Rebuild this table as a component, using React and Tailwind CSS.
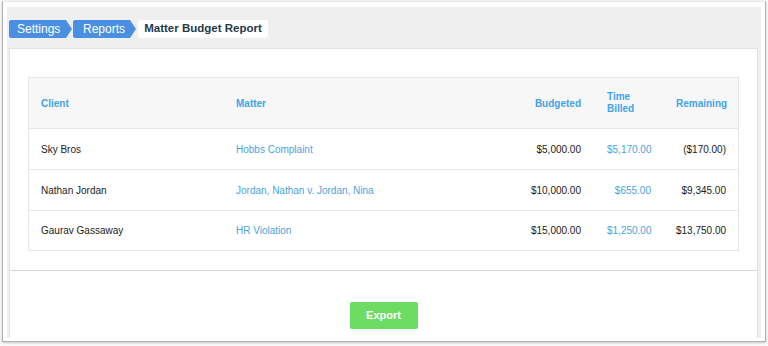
const rows = [
  { client: "Sky Bros", matter: "Hobbs Complaint", budgeted: "$5,000.00", billed: "$5,170.00", remaining: "($170.00)" },
  { client: "Nathan Jordan", matter: "Jordan, Nathan v. Jordan, Nina", budgeted: "$10,000.00", billed: "$655.00", remaining: "$9,345.00" },
  { client: "Gaurav Gassaway", matter: "HR Violation", budgeted: "$15,000.00", billed: "$1,250.00", remaining: "$13,750.00" },
];

const cols = "grid grid-cols-[194px_251px_120px_70px_74px]";

function Crumb({ children, pad }) {
  return (
    <div
      className={`h-[18px] w-[63px] flex items-center bg-[#4a90e2] text-white text-[12px] rounded-l-[2px] [clip-path:polygon(0_0,57px_0,63px_50%,57px_100%,0_100%)] ${pad}`}
    >
      {children}
    </div>
  );
}

export default function App() {
  return (
    <div className="w-[768px] h-[346px] bg-white pt-[1px] pl-[2px] font-['Liberation_Sans',Arial,sans-serif]">
      <div className="w-[764px] h-[341px] bg-white border border-[#b3b3b3] border-t-[#e6e6e6] pt-[5px] pl-[4px] shadow-[0_1px_3px_rgba(0,0,0,0.25)]">
        <div className="w-[754px] h-[331px] bg-[#efefef] flex flex-col">
          <div className="h-[41px] shrink-0 pt-[13px] pl-[2px] flex items-start">
            <Crumb pad="pl-[8px]">Settings</Crumb>
            <div className="ml-[1px]">
              <Crumb pad="pl-[10px]">Reports</Crumb>
            </div>
            <div className="ml-[2px] h-[18px] w-[130px] bg-white rounded-[2px] flex items-center justify-center text-[11.5px] font-bold text-[#233a4b]">
              Matter Budget Report
            </div>
          </div>

          <div className="flex-1 ml-[2px] mr-[3px] bg-white border border-[#e2e2e2] border-b-0 flex flex-col">
            <div className="mt-[28px] mx-[18px] border border-[#e6e6e6] text-[10px]">
              <div className={`${cols} h-[51px] bg-[#f7f7f7] border-b border-[#e6e6e6] font-bold text-[#42a4e8] items-center`}>
                <div className="pl-[12px]">Client</div>
                <div className="pl-[13px]">Matter</div>
                <div className="pr-[13px] text-right">Budgeted</div>
                <div className="pl-[13px] pr-[13px] leading-[12px]">
                  Time
                  <br />
                  Billed
                </div>
                <div className="pl-[12px] pr-[12px] text-right">Remaining</div>
              </div>
              {rows.map((r, i) => (
                <div
                  key={r.client}
                  className={`${cols} items-center ${i < rows.length - 1 ? "h-[41px] border-b border-[#e9e9e9]" : "h-[39px]"}`}
                >
                  <div className="pl-[12px] text-[#222]">{r.client}</div>
                  <div className="pl-[13px] text-[#4aa3e0]">{r.matter}</div>
                  <div className="pr-[13px] text-right text-[#1a1a1a]">{r.budgeted}</div>
                  <div className="pl-[13px] pr-[13px] text-right text-[#4aa3e0]">{r.billed}</div>
                  <div className="pl-[12px] pr-[12px] text-right text-[#1a1a1a]">{r.remaining}</div>
                </div>
              ))}
            </div>

            <div className="mt-[19px] h-[1px] bg-[#d6d6d6]" />

            <div className="mt-[31px] flex justify-center">
              <button className="w-[68px] h-[27px] bg-[#6ddc63] rounded-[2px] text-white text-[11px] font-bold">
                Export
              </button>
            </div>
          </div>
        </div>
      </div>
    </div>
  );
}
